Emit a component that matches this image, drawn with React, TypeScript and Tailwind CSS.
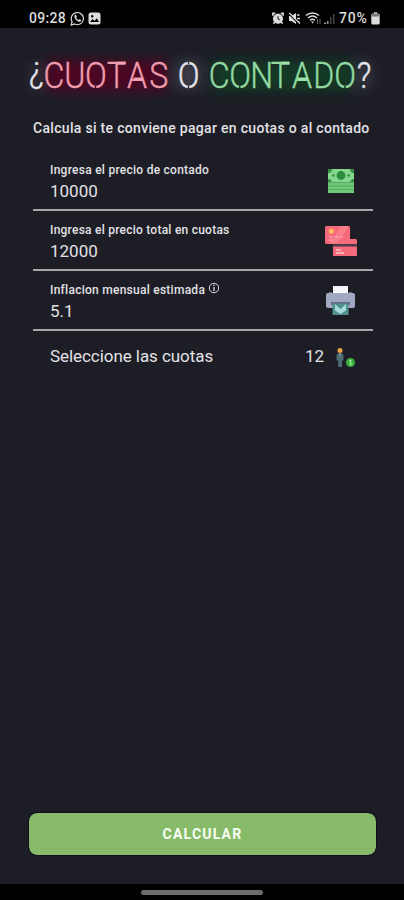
import React from 'react';

interface FieldProps {
  label: string;
  value: string;
  labelClass: string;
  info?: boolean;
  children: React.ReactNode;
}

const StatusBar: React.FC = () => (
  <header className="h-7 bg-black text-[#dcdcdc] flex justify-between pt-2 pl-[29px] pr-[24px]">
    <div className="flex items-center h-5">
      <span className="text-[14px] font-medium leading-5 w-[41px] whitespace-nowrap tracking-[0.3px]">09:28</span>
      <svg width="15" height="15" viewBox="0 0 15 15" fill="none" stroke="currentColor">
        <path d="M1.2 14l.9-3.3A6.1 6.1 0 1 1 4.5 13L1.200 14z" strokeWidth="1.200" />
        <path d="M4.700 4.200c-.8 1.700.1 3.600 1.600 5 1.500 1.300 3.400 2.100 4.600.9.7-.8.200-1.100-.6-1.600-1-.6-1.100.5-1.700.5-.9-.3-2.200-1.500-2.400-2.300.1-.5.9-.7.500-1.500-.5-1.100-1.100-1.900-2-1z" fill="currentColor" stroke="none" />
      </svg>
      <svg className="ml-[3px]" width="13" height="13" viewBox="0 0 13 13">
        <rect x=".5" y=".5" width="12" height="12" rx="2.500" fill="currentColor" />
        <path d="M2 10l2.500-3 2 2 2.200-2.700L11 10z" fill="#000" />
        <circle cx="4.200" cy="4.200" r="1.200" fill="#000" />
      </svg>
    </div>
    <div className="flex items-center h-5">
      <svg width="12" height="13" viewBox="0 0 13 13" fill="none" stroke="currentColor">
        <path d="M1 3.500V1h2.500M9.500 1H12v2.500M1.500 12l2-2M11.500 12l-2-2" strokeWidth="1.800" />
        <circle cx="6.500" cy="6.700" r="5" fill="currentColor" />
        <path d="M6.500 4v3l2 1" stroke="#000" />
      </svg>
      <svg className="ml-[4px]" width="13" height="13" viewBox="0 0 13 13" fill="currentColor">
        <path d="M1 4h2.500L8 1v11L3.500 9H1z" />
        <path d="M9 3h2.500M9 6.500h3M9 10h2.500" stroke="currentColor" strokeWidth="1.700" />
        <path d="M1 2l10 10" stroke="#000" strokeWidth="1.200" />
        <path d="M1.300 1l10.700 10.700" stroke="currentColor" strokeWidth="1.200" />
      </svg>
      <svg className="ml-[4px]" width="17" height="14" viewBox="0 0 17 14" fill="none" stroke="currentColor" strokeWidth="1.500">
        <path d="M1 4.500c3.700-3.500 9.300-3.500 13 0M3 7c2.700-2.500 6.300-2.500 9 0M5 9.300c1.600-1.400 3.400-1.400 5 0" />
        <path d="M6 10.500h3L7.500 12.500z" fill="currentColor" stroke="none" />
        <path d="M12.500 8v5M15 8v5" stroke="#666" strokeWidth="1" />
      </svg>
      <svg className="ml-[1px]" width="13" height="13" viewBox="0 0 13 13">
        <path d="M1 10.500h2V12H1zM4 9h1.500v3H4z" fill="#999" />
        <path d="M7 5h1.500v7H7zM10 2h1.500v10H10z" fill="#444" />
      </svg>
      <span className="ml-[3px] text-[14px] font-medium leading-5 w-[32px] whitespace-nowrap tracking-[0.8px]">70%</span>
      <svg width="9" height="13" viewBox="0 0 9 13">
        <path d="M3 0h3v2H3z" fill="#999" />
        <rect x=".3" y="1.500" width="8.400" height="11" rx="1.500" fill="currentColor" />
        <path d="M1 2h7v2.500H1z" fill="#777" />
      </svg>
    </div>
  </header>
);

const NARROW = 0.88;

// left edges of the letters, in the narrowed coordinate system
const letters = (...xs: number[]) => xs.map((x) => (x / NARROW).toFixed(2)).join(' ');

const NeonTitle: React.FC = () => (
  <svg className="block w-full" height="82" viewBox="0 0 404 82" fontFamily='Roboto, "Liberation Sans", sans-serif' fontSize="36.500" fontWeight="300">
    <defs>
      <filter id="glow" x="-20%" y="-60%" width="140%" height="220%">
        <feGaussianBlur stdDeviation="6" />
      </filter>
    </defs>
    <g filter="url(#glow)">
      <rect x="45" y="32" width="122" height="31" fill="#58051f" opacity=".75" />
      <rect x="211" y="32" width="144" height="31" fill="#0c421f" opacity=".75" />
      <rect x="176" y="33" width="25" height="28" fill="#556" opacity=".5" />
      <rect x="358" y="33" width="14" height="28" fill="#556" opacity=".4" />
      <rect x="29" y="35" width="13" height="28" fill="#556" opacity=".2" />
    </g>
    <g transform={`scale(${NARROW} 1)`} strokeWidth=".4">
      <text x={letters(29)} y="54" fill="#e4e4ea" stroke="#e4e4ea">¿</text>
      <text x={letters(43.5, 64.3, 85, 107, 127, 149.3)} y="60" fill="#ee9bad" stroke="#ee9bad">CUOTAS</text>
      <text x={letters(177.8)} y="60" fill="#e4e4ea" stroke="#e4e4ea">O</text>
      <text x={letters(208.8, 229.2, 250.3, 270.700, 292, 313.2, 334.3)} y="60" fill="#91d8a1" stroke="#91d8a1">CONTADO</text>
      <text x={letters(356.7)} y="60" fill="#e4e4ea" stroke="#e4e4ea">?</text>
    </g>
    {/* breaks in the tubes */}
    <path d="M95.500 57.500v4" stroke="#4d1024" strokeWidth="1.500" />
    <path d="M239.700 57.500v4M345 57.500v4" stroke="#123d22" strokeWidth="1.500" />
    <path d="M188.500 32v4M188.500 57.500v4" stroke="#393a45" strokeWidth="1.500" />
    {/* brighter bars of T and A */}
    <path d="M117 35.300h8.500M134 51h9" stroke="#f2a2b3" strokeWidth="3" />
    <path d="M281 35.300h8.500M298 51h9" stroke="#9de2aa" strokeWidth="3" />
  </svg>
);

const MoneyIcon = () => (
  <svg width="28" height="26" viewBox="0 0 28 26">
    <rect x="1" y="1" width="26" height="14" fill="#86d58d" />
    <path d="M1 1h4a4 4 0 0 1-4 4zM27 1h-4a4 4 0 0 0 4 4zM1 14v-3a4 4 0 0 1 4 3zM27 14v-3a4 4 0 0 0-4 3z" fill="#368f45" />
    <circle cx="14" cy="7.500" r="4.400" fill="#2c8c3d" />
    <circle cx="6.300" cy="7.500" r="1.200" fill="#2c8c3d" />
    <circle cx="21.700" cy="7.500" r="1.200" fill="#2c8c3d" />
    <path d="M1 14h26v11H1z" fill="#6fc578" />
    <path d="M1 14.500h26M1 18h26M1 21.500h26" stroke="#55ae61" />
  </svg>
);

const CardsIcon = () => (
  <svg width="33" height="32" viewBox="0 0 33 32">
    <rect x="1" y="1" width="25" height="18" rx="1.500" fill="#f56b7b" />
    <path d="M17 1h7.500L13 19H6z" fill="#fa7f8b" />
    <rect x="5" y="4" width="4.500" height="4.500" rx="1" fill="#ffc15c" />
    <path d="M5 12h4M10.500 12h4M16 12h3M5 15h4" stroke="#ffb3ba" strokeWidth="1.200" />
    <rect x="9" y="18" width="24" height="13" rx="1" fill="#f56b7b" />
    <path d="M26 14h5.500q1.500 0 1.500 1.500V19h-7z" fill="#f56b7b" />
    <path d="M9 19h24v2.500H9z" fill="#493c48" />
    <path d="M12 25h5M12 28h8" stroke="#ffc1c8" strokeWidth="1.500" />
  </svg>
);

const PrinterIcon = () => (
  <svg width="31" height="31" viewBox="0 0 31 31">
    <rect x="8" y="1" width="15" height="9" fill="#f4f4fa" />
    <path d="M4 7h3v2h17V7h3v3H4z" fill="#6c7085" />
    <rect x="1" y="8" width="29" height="15" rx="2" fill="#a3a8c2" />
    <path d="M6 17h19v3H6z" fill="#656a82" />
    <path d="M7.500 18.500h16V30h-16z" fill="#4f918e" />
    <path d="M10 19l5.500 5 5.500-5v6.500L15.500 29 10 25.500z" fill="#a5d8d6" />
    <path d="M12.500 19.500l3 3 3-3" fill="none" stroke="#4b918f" strokeWidth="1.500" />
  </svg>
);

const PersonIcon = () => (
  <svg width="21" height="21" viewBox="0 0 21 21">
    <circle cx="5" cy="3.500" r="2.500" fill="#e8a544" />
    <path d="M2.500 6.500h5l1 2v5H7V20H3.200v-6.500H1.500v-5z" fill="#4e6b73" />
    <path d="M4.300 6.500h1.400L5 10z" fill="#a9bbc0" />
    <circle cx="15.500" cy="15.500" r="4.500" fill="#35ab40" />
    <path d="M17 13.800c-1-1-3-.7-3 .4 0 1.500 3 .9 3 2.500 0 1.200-2.200 1.300-3.200.3M15.500 12.500v6" fill="none" stroke="#8ce28a" />
  </svg>
);

const Field: React.FC<FieldProps> = ({ label, value, labelClass, info, children }) => (
  <div className="h-[60px] border-b-2 border-[#a6a6a8] flex justify-between">
    <div className="pl-[17px] pt-[10px]">
      <div className="flex h-[18px]">
        <label className={`text-[12px] leading-[18px] font-medium whitespace-nowrap ${labelClass}`}>{label}</label>
        {info && (
          <svg className="ml-[3px] mt-[1px]" width="12" height="12" viewBox="0 0 12 12" fill="none" stroke="#dedee1">
            <circle cx="6" cy="6" r="4.700" />
            <path d="M6 5v4M6 2.700v1.300" strokeWidth="1.300" />
          </svg>
        )}
      </div>
      <div className="text-[17px] leading-6">{value}</div>
    </div>
    <div className="w-[65px] flex items-center justify-center pt-[1px]">{children}</div>
  </div>
);

const App: React.FC = () => {
  return (
    <div className="w-[404px] h-[900px] bg-[#1d1d26] text-[#e2e2e5] flex flex-col overflow-hidden font-[Roboto,'Liberation_Sans',sans-serif]">
      <StatusBar />
      <main className="flex-1 flex flex-col">
        <NeonTitle />
        <p className="text-[14px] leading-5 h-[41px] pt-[8px] pl-[33px] font-medium whitespace-nowrap tracking-[0.31px]">
          Calcula si te conviene pagar en cuotas o al contado
        </p>
        <section className="ml-[33px] w-[340px]">
          <Field label="Ingresa el precio de contado" value="10000" labelClass="tracking-[0.26px]">
            <MoneyIcon />
          </Field>
          <Field label="Ingresa el precio total en cuotas" value="12000" labelClass="tracking-[0.24px]">
            <CardsIcon />
          </Field>
          <Field label="Inflacion mensual estimada" value="5.1" labelClass="tracking-[0.26px]" info>
            <PrinterIcon />
          </Field>
          <div className="h-[52px] pl-[17px] pr-[17px] flex items-center text-[17px]">
            <span className="flex-1 tracking-[-0.06px]">Seleccione las cuotas</span>
            <span>12</span>
            <span className="ml-[11px]"><PersonIcon /></span>
          </div>
        </section>
        <button className="mt-auto mb-[29px] ml-[29px] w-[347px] h-[42px] rounded-[8px] bg-[#87bb69] text-[#f8fff4] text-[14px] font-bold tracking-[1.2px] outline outline-1 outline-[#101018]">
          CALCULAR
        </button>
      </main>
      <footer className="h-4 bg-black flex justify-center pt-[6px]">
        <div className="w-[122px] h-[5px] rounded-full bg-[#6c6c6c]" />
      </footer>
    </div>
  );
};

export default App;
